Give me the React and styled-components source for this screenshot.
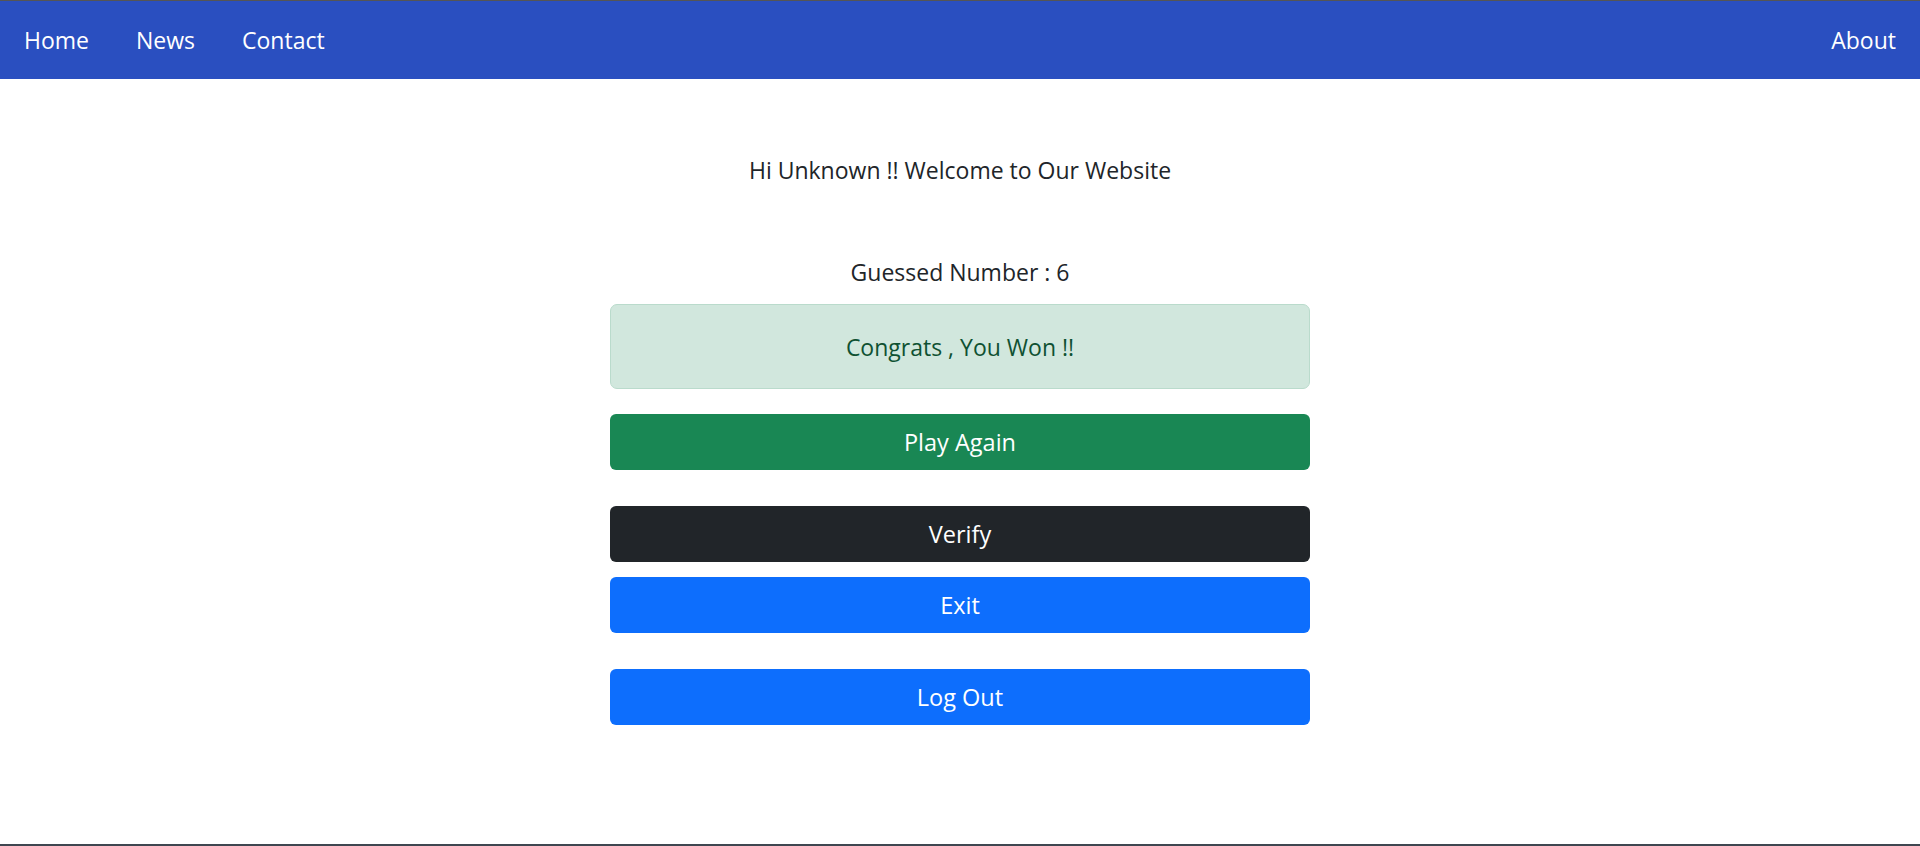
import React from "react";
import styled, { createGlobalStyle } from "styled-components";

const GlobalStyle = createGlobalStyle`
  html, body {
    margin: 0;
    padding: 0;
    background: #fff;
  }
  body {
    font-family: "Open Sans", "Noto Sans", sans-serif;
    color: #212529;
  }
`;

const Frame = styled.div`
  height: 846px;
  box-sizing: border-box;
  border-top: 1px solid #555;
  border-bottom: 2px solid #3f4650;
  display: flex;
  flex-direction: column;
`;

const NavBar = styled.nav`
  height: 78px;
  background: #2a4fc0;
  display: flex;
  align-items: center;
  justify-content: space-between;
  padding: 0 24px 0 24px;
`;

const NavGroup = styled.div`
  display: flex;
  align-items: center;
  gap: 47px;
`;

const NavLink = styled.a`
  color: #fff;
  font-size: 23px;
  text-decoration: none;
  line-height: 1;
  cursor: pointer;
`;

const Main = styled.main`
  width: 700px;
  margin: 0 auto;
  padding-top: 73px;
  display: flex;
  flex-direction: column;
`;

const Greeting = styled.p`
  margin: 0;
  text-align: center;
  font-size: 23px;
  line-height: 36px;
`;

const Guess = styled.p`
  margin: 66px 0 14px;
  text-align: center;
  font-size: 23px;
  line-height: 36px;
`;

const Alert = styled.div`
  height: 85px;
  box-sizing: border-box;
  display: flex;
  align-items: center;
  justify-content: center;
  background: #d1e7dd;
  border: 1px solid #badbcc;
  border-radius: 7px;
  color: #0f5132;
  font-size: 23px;
`;

const colors = {
  success: "#198754",
  dark: "#212529",
  primary: "#0d6efd",
};

const Button = styled.button`
  height: 56px;
  width: 100%;
  margin-top: ${(p) => p.$gap}px;
  border: none;
  border-radius: 6px;
  background: ${(p) => colors[p.$variant]};
  color: #fff;
  font-family: inherit;
  font-size: 23.5px;
  cursor: pointer;
`;

export default function App() {
  return (
    <Frame>
      <GlobalStyle />
      <NavBar>
        <NavGroup>
          <NavLink>Home</NavLink>
          <NavLink>News</NavLink>
          <NavLink>Contact</NavLink>
        </NavGroup>
        <NavLink>About</NavLink>
      </NavBar>
      <Main>
        <Greeting>Hi Unknown !! Welcome to Our Website</Greeting>
        <Guess>Guessed Number : 6</Guess>
        <Alert>Congrats , You Won !!</Alert>
        <Button $variant="success" $gap={25}>Play Again</Button>
        <Button $variant="dark" $gap={36}>Verify</Button>
        <Button $variant="primary" $gap={15}>Exit</Button>
        <Button $variant="primary" $gap={36}>Log Out</Button>
      </Main>
    </Frame>
  );
}
